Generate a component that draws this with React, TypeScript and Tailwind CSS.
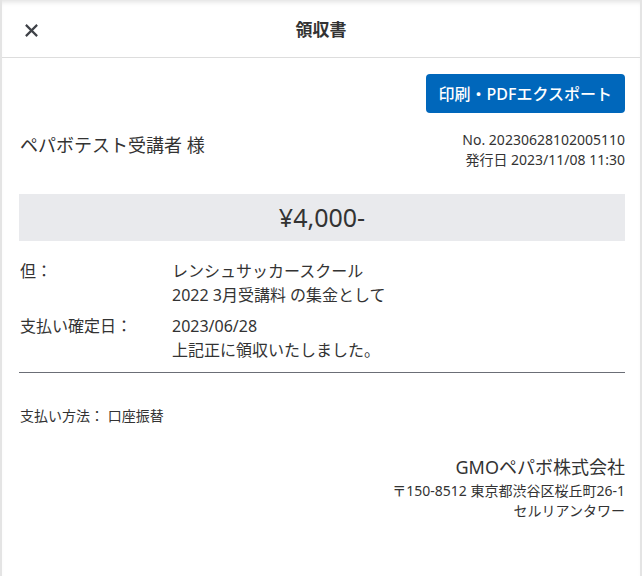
import React from "react";

export default function App() {
  const font = { fontFamily: '"Noto Sans", "Noto Sans CJK JP", sans-serif' };
  return (
    <div className="w-[642px] h-[576px] bg-[#e4e4e4] px-[2px] text-[#333333]" style={font}>
      <div className="h-full bg-white flex flex-col shadow-[inset_0_5px_5px_-3px_rgba(0,0,0,0.12)]">
        <div className="h-[58px] border-b border-[#dddddd] relative flex items-center justify-center shrink-0">
          <button className="absolute left-[19px] top-[20px] w-[20px] h-[20px] flex items-center justify-center">
            <svg width="15" height="15" viewBox="0 0 16 16">
              <path d="M2 2 L14 14 M14 2 L2 14" stroke="#3f4248" strokeWidth="2.3" strokeLinecap="butt" />
            </svg>
          </button>
          <div className="text-[17px] font-bold text-[#333] leading-none mt-[2px]">領収書</div>
        </div>
        <div className="pl-[17px] pr-[15px] pt-[16px] flex flex-col">
          <div className="flex justify-end">
            <button className="h-[39px] px-[13px] bg-[#0067bb] text-white rounded-[4px] text-[16px] font-medium leading-none">
              印刷・PDFエクスポート
            </button>
          </div>
          <div className="flex justify-between items-start mt-[17px]">
            <div className="text-[18px] leading-[26px] mt-[2px] pl-[1px]">ペパボテスト受講者 様</div>
            <div className="text-right text-[14px] leading-[20px]">
              <div>No. 20230628102005110</div>
              <div>発行日 2023/11/08 11:30</div>
            </div>
          </div>
          <div className="mt-[24px] h-[47px] bg-[#e9eaed] flex items-center justify-center text-[25px] leading-none">
            ¥4,000-
          </div>
          <div className="mt-[18px] grid grid-cols-[153px_1fr] text-[16px] leading-[24px] gap-y-[7px]">
            <div className="pl-[1px]">但：</div>
            <div>
              <div>レンシュサッカースクール</div>
              <div>2022 3月受講料 の集金として</div>
            </div>
            <div className="pl-[1px]">支払い確定日：</div>
            <div>
              <div>2023/06/28</div>
              <div>上記正に領収いたしました。</div>
            </div>
          </div>
          <div className="mt-[10px] h-px bg-[#6b6e76]"></div>
          <div className="mt-[33px] text-[14px] leading-[20px] pl-[1px]">支払い方法： 口座振替</div>
          <div className="mt-[28px] text-right">
            <div className="text-[18px] leading-[26px]">GMOペパボ株式会社</div>
            <div className="text-[14px] leading-[20px] mt-[1px]">〒150-8512 東京都渋谷区桜丘町26-1</div>
            <div className="text-[14px] leading-[19px]">セルリアンタワー</div>
          </div>
        </div>
      </div>
    </div>
  );
}
